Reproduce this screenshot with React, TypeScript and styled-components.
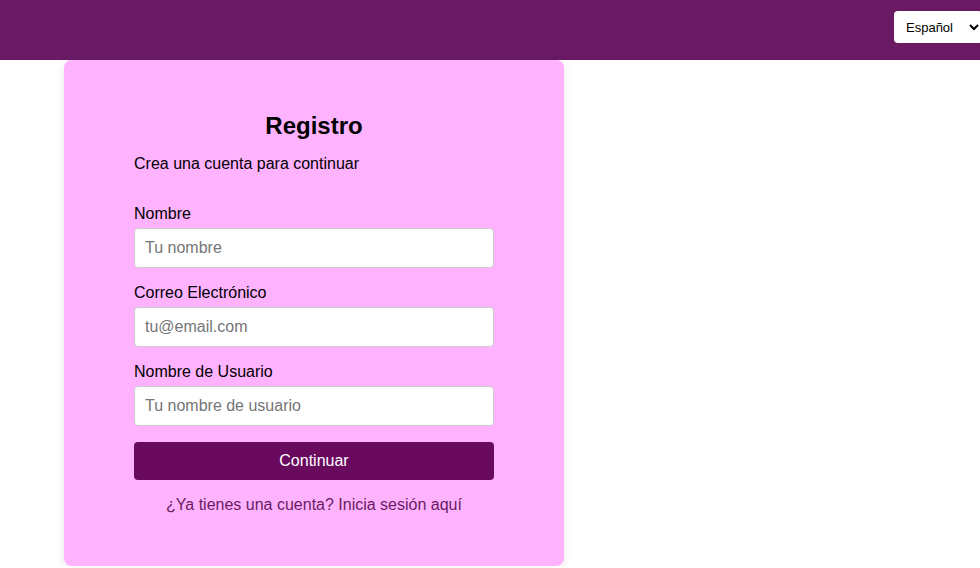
import React from "react";
import styled, { createGlobalStyle } from "styled-components";

const GlobalStyle = createGlobalStyle`
  html, body {
    margin: 0;
    padding: 0;
    background: #ffffff;
    font-family: "Liberation Sans", Arial, sans-serif;
  }
  * { box-sizing: border-box; }
`;

const Header = styled.header`
  height: 60px;
  background: #691a63;
  display: flex;
  align-items: flex-start;
  justify-content: flex-end;
  padding-top: 11px;
`;

const LangSelect = styled.select`
  height: 32px;
  width: 88px;
  padding: 0 4px 0 8px;
  border: none;
  border-radius: 4px;
  background: #ffffff;
  font-family: "Liberation Sans", Arial, sans-serif;
  font-size: 13px;
  color: #000;
  margin-right: -2px;
`;

const Main = styled.main`
  padding-left: 64px;
`;

const Card = styled.section`
  width: 500px;
  background: #ffb3ff;
  border-radius: 8px;
  box-shadow: 0 2px 8px rgba(0, 0, 0, 0.1);
  padding: 52px 70px 52px;
  display: flex;
  flex-direction: column;
`;

const Title = styled.h2`
  margin: 0;
  font-size: 24px;
  font-weight: bold;
  text-align: center;
  color: #000;
`;

const Subtitle = styled.p`
  margin: 15px 0 0;
  font-size: 16px;
  color: #000;
`;

const Form = styled.form`
  margin-top: 32px;
  display: flex;
  flex-direction: column;
`;

const Field = styled.div`
  display: flex;
  flex-direction: column;
  gap: 5px;
  margin-bottom: 16px;
`;

const Label = styled.label`
  font-size: 16px;
  line-height: 18px;
  color: #000;
`;

const Input = styled.input`
  height: 40px;
  width: 100%;
  padding: 0 10px;
  border: 1px solid #cccccc;
  border-radius: 4px;
  background: #fff;
  font-family: "Liberation Sans", Arial, sans-serif;
  font-size: 16px;
  &::placeholder { color: #757575; }
`;

const Button = styled.button`
  height: 38px;
  width: 100%;
  border: none;
  border-radius: 4px;
  background: #690a5f;
  color: #fff;
  font-family: "Liberation Sans", Arial, sans-serif;
  font-size: 16px;
`;

const LoginLink = styled.a`
  margin-top: 16px;
  text-align: center;
  font-size: 16px;
  color: #6a1b63;
  text-decoration: none;
`;

const fields = [
  { id: "name", label: "Nombre", placeholder: "Tu nombre", type: "text" },
  { id: "email", label: "Correo Electrónico", placeholder: "tu@email.com", type: "email" },
  { id: "user", label: "Nombre de Usuario", placeholder: "Tu nombre de usuario", type: "text" },
];

export default function App() {
  return (
    <>
      <GlobalStyle />
      <Header>
        <LangSelect defaultValue="es">
          <option value="es">Español</option>
          <option value="en">English</option>
        </LangSelect>
      </Header>
      <Main>
        <Card>
          <Title>Registro</Title>
          <Subtitle>Crea una cuenta para continuar</Subtitle>
          <Form onSubmit={(e) => e.preventDefault()}>
            {fields.map((f) => (
              <Field key={f.id}>
                <Label htmlFor={f.id}>{f.label}</Label>
                <Input id={f.id} type={f.type} placeholder={f.placeholder} />
              </Field>
            ))}
            <Button type="submit">Continuar</Button>
            <LoginLink href="#">¿Ya tienes una cuenta? Inicia sesión aquí</LoginLink>
          </Form>
        </Card>
      </Main>
    </>
  );
}
